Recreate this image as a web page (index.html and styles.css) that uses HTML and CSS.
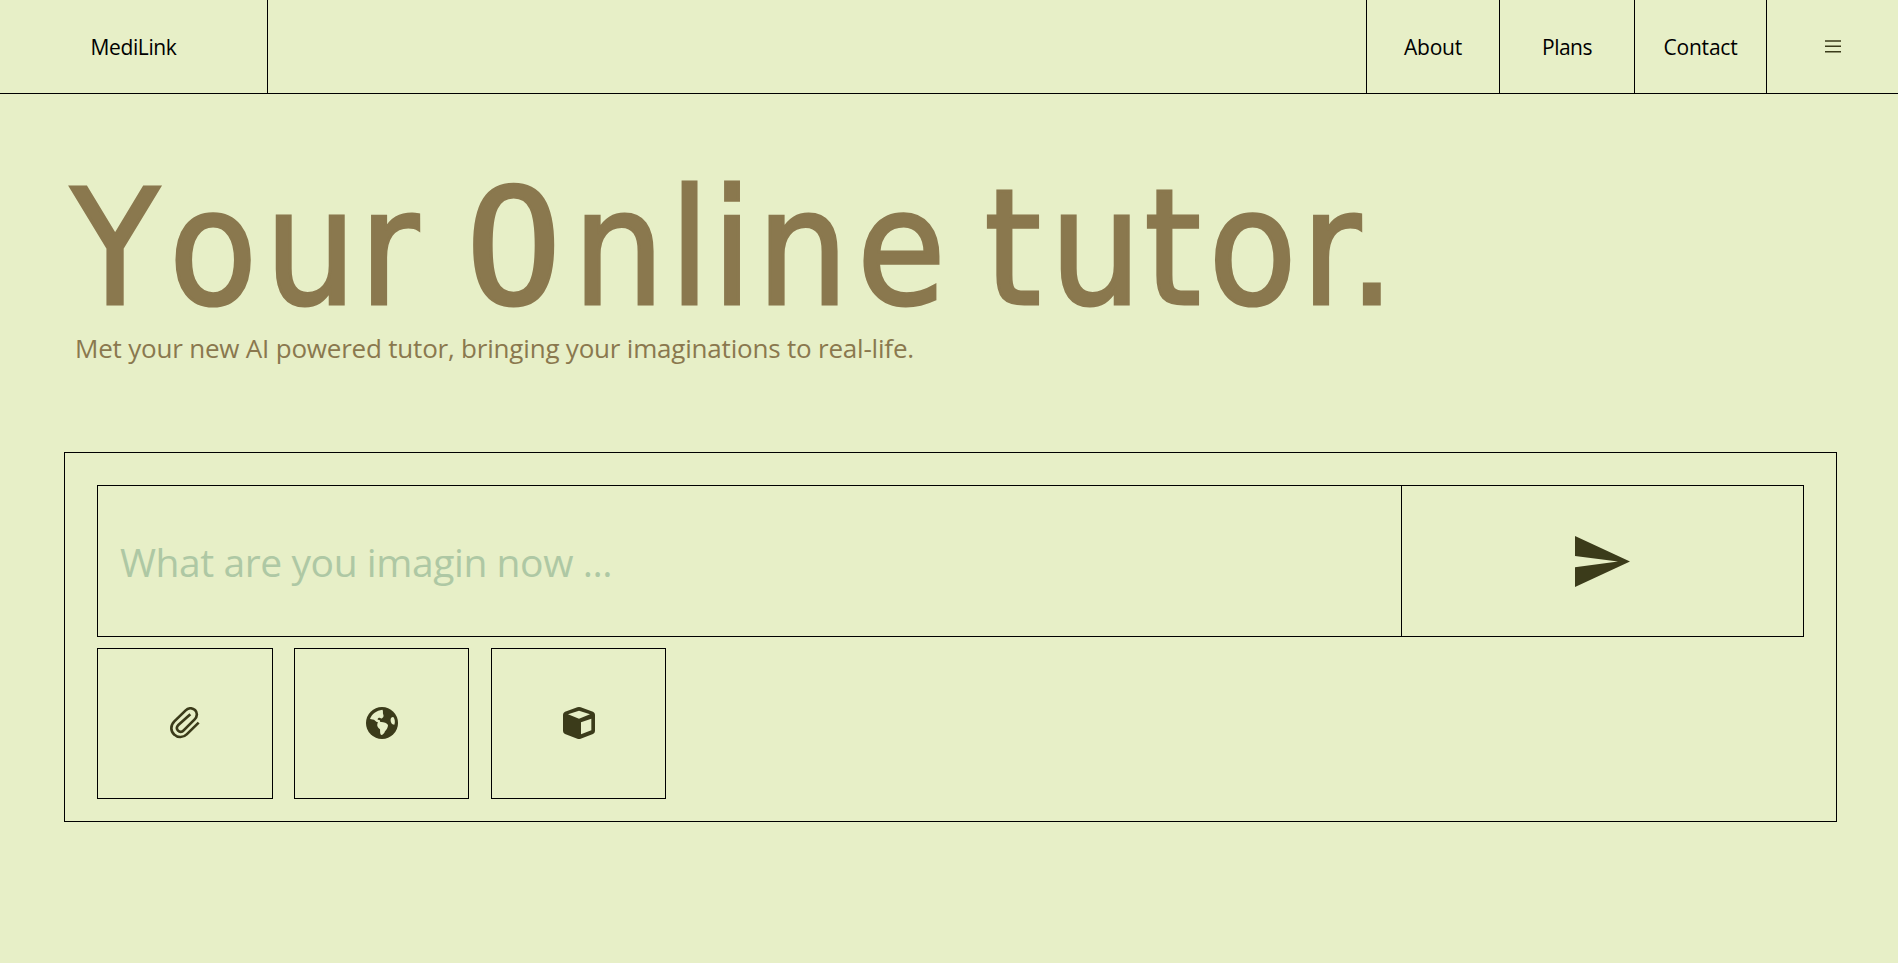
FILE: index.html
```html
<!DOCTYPE html>
<html lang="en">
<head>
<meta charset="utf-8">
<title>MediLink</title>
<link rel="stylesheet" href="styles.css">
</head>
<body>
<header class="header">
  <a class="brand">MediLink</a>
  <nav class="nav">
    <a class="nav-link about">About</a>
    <a class="nav-link plans">Plans</a>
    <a class="nav-link contact">Contact</a>
    <button class="menu" aria-label="Menu">
      <svg width="18" height="16" viewBox="0 0 18 16" fill="none" stroke="#3b3b1a" stroke-width="1.6"><path d="M1 3h16M1 8.3h16M1 13.7h16"/></svg>
    </button>
  </nav>
</header>
<main class="main">
  <h1 class="title">
    <svg class="title-art" width="1360" height="160" viewBox="64 160 1360 160">
      <text y="303.5" x="71 169 265 359.5 430 465.5 573 669.5 712 757 857 950 984.5 1050 1144.5 1208.5 1301.5 1349">Your <tspan class="title-cap">O</tspan>nline tutor.</text>
    </svg>
  </h1>
  <p class="subtitle">Met your new AI powered tutor, bringing your imaginations to real-life.</p>
  <section class="composer">
    <div class="prompt">
      <input class="prompt-input" type="text" placeholder="What are you imagin now ...">
      <button class="send" aria-label="Send">
        <svg width="55" height="51" viewBox="0 0 55 50" preserveAspectRatio="none" fill="#3b3b1a"><path d="M0 0 55 25 0 50V30.7L43 25 0 19.7z"/></svg>
      </button>
    </div>
    <div class="tools">
      <button class="tool tool-wide" aria-label="Attach">
        <svg width="30" height="32" viewBox="0 0 90 96" fill="none" stroke="#3b3b1a" stroke-width="8"><path d="M86 47 50 82C40 92 23 93 13 83 1 72 1 55 13 43L47 10C55 2 67 2 75 9 83 17 82 29 74 37L41 70C36 76 29 76 24 71 19 66 19 60 25 54L61 22"/></svg>
      </button>
      <button class="tool" aria-label="Web">
        <svg width="32" height="32" viewBox="0 0 96 96"><circle cx="48" cy="48" r="48" fill="#3b3b1a"/><path fill="#e7efc7" d="M49 8C53 12 49 17 52 23 55 30 48 35 44 34 43 31 36 32 35 36 34 40 38 38 41 39L43 45C50 44 63 47 66 54 66 61 62 69 57 73 55 79 51 84 45 84 41 78 43 72 42 67 37 63 32 57 34 50L36 46C30 45 28 40 24 38L12 36C17 21 32 10 49 8zM82 30C87 37 88 46 85 53 77 53 73 45 74 36 75 31 79 29 82 30z"/></svg>
      </button>
      <button class="tool tool-last" aria-label="Model">
        <svg width="32" height="32" viewBox="0 0 96 96"><path fill="#3b3b1a" d="M43 1Q48-1 53 1L90 14Q96 17 96 23V72Q96 78 90 81L53 95Q48 97 43 95L6 81Q0 78 0 72V23Q0 17 6 14z"/><path fill="#e7efc7" d="M48 11 81 22 48 35 15 22zM54 46 85 35V70L54 82z"/></svg>
      </button>
    </div>
  </section>
</main>
</body>
</html>
```
FILE: styles.css
```css
* { box-sizing: border-box; }
body {
  margin: 0;
  min-height: 963px;
  background: #e7efc7;
  color: #000;
  font-family: "Open Sans", "Noto Sans", sans-serif;
}
button {
  display: flex;
  align-items: center;
  justify-content: center;
  margin: 0;
  padding: 0;
  border: 0;
  background: none;
}
.header {
  display: flex;
  justify-content: space-between;
  height: 94px;
  border-bottom: 1px solid #000;
  font-size: 21px;
}
.brand, .nav-link {
  display: flex;
  align-items: center;
  justify-content: center;
  letter-spacing: -0.2px;
}
.brand {
  width: 268px;
  border-right: 1px solid #000;
  letter-spacing: -0.4px;
}
.nav { display: flex; }
.nav-link { border-left: 1px solid #000; }
.about { width: 133px; }
.plans { width: 135px; letter-spacing: -0.5px; }
.contact { width: 132px; }
.menu {
  width: 132px;
  padding: 0 0 1px 1px;
  border-left: 1px solid #000;
}
.main { padding: 66px 61px 0 64px; }
.title { margin: 0; height: 160px; }
.title-art {
  display: block;
  overflow: visible;
  fill: #8a784e;
  stroke: #8a784e;
  stroke-width: 3px;
  font-family: "DejaVu Sans Condensed", "DejaVu Sans", sans-serif;
  font-size: 160px;
  font-stretch: condensed;
  font-weight: 400;
}
.title-cap { font-family: "DejaVu Sans Mono", monospace; }
.subtitle {
  margin: 8px 0 0;
  padding-left: 11px;
  color: #8a784e;
  font-size: 26px;
  line-height: 40px;
  letter-spacing: -0.2px;
}
.composer {
  height: 370px;
  margin-top: 84px;
  padding: 32px;
  border: 1px solid #000;
}
.prompt {
  display: flex;
  height: 152px;
  border: 1px solid #000;
}
.prompt-input {
  flex: 1;
  min-width: 0;
  padding: 0 22px;
  border: 0;
  outline: 0;
  background: none;
  color: #3b3b1a;
  font-family: inherit;
  font-size: 39px;
  letter-spacing: -0.42px;
}
.prompt-input::placeholder { color: #aec8a4; opacity: 1; }
.send { width: 402px; border-left: 1px solid #000; }
.tools {
  display: flex;
  gap: 21px;
  margin-top: 11px;
}
.tool {
  width: 175px;
  height: 151px;
  padding-bottom: 1px;
  border: 1px solid #000;
}
.tool-wide { width: 176px; }
.tool-last { margin-left: 1px; }
```
